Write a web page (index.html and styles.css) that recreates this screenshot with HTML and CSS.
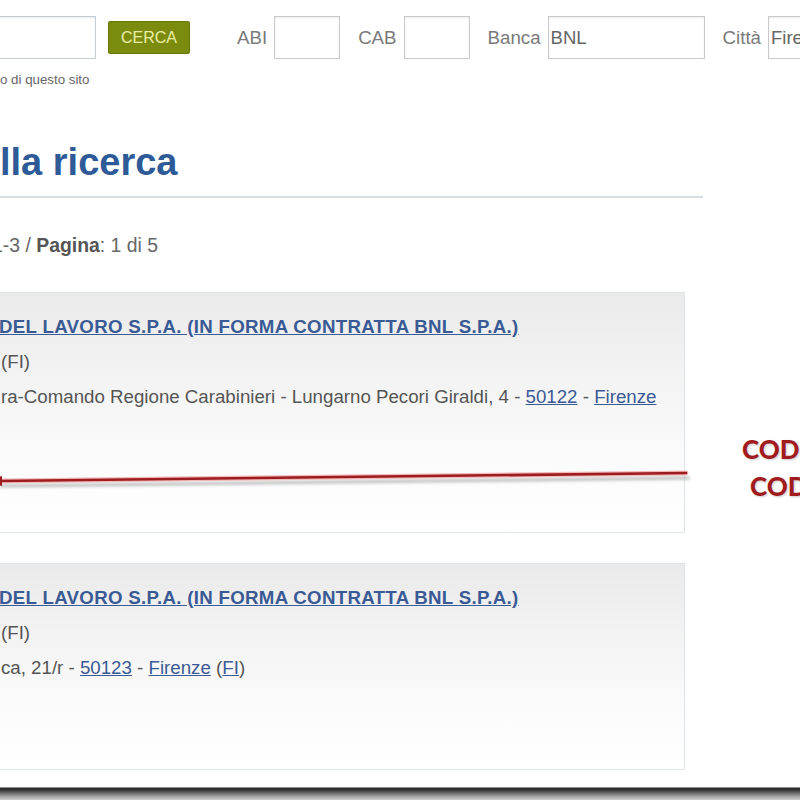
FILE: index.html
```html
<!DOCTYPE html>
<html lang="it">
<head>
<meta charset="utf-8">
<title>Risultati della ricerca</title>
<link rel="stylesheet" href="styles.css">
</head>
<body>
<div class="screen">
  <div class="topbar">
    <input class="field field-search" type="text" aria-label="Cerca">
    <button class="btn-cerca" type="button">CERCA</button>
    <label class="lbl lbl-first">ABI</label>
    <input class="field field-small" type="text">
    <label class="lbl">CAB</label>
    <input class="field field-small" type="text">
    <label class="lbl">Banca</label>
    <input class="field field-wide" type="text" value="BNL">
    <label class="lbl">Città</label>
    <input class="field field-wide" type="text" value="Firenze">
  </div>
  <div class="hint">o di questo sito</div>

  <h1 class="title">lla ricerca</h1>

  <div class="pager">1-3 / <b>Pagina</b>: 1 di 5</div>

  <div class="card card-tall">
    <div class="row"><a class="bank" href="#">DEL LAVORO S.P.A. (IN FORMA CONTRATTA BNL S.P.A.)</a></div>
    <div class="row">(FI)</div>
    <div class="row">ra-Comando Regione Carabinieri - Lungarno Pecori Giraldi, 4 - <a href="#">50122</a> - <a href="#">Firenze</a></div>
  </div>

  <div class="card">
    <div class="row"><a class="bank" href="#">DEL LAVORO S.P.A. (IN FORMA CONTRATTA BNL S.P.A.)</a></div>
    <div class="row">(FI)</div>
    <div class="row">ca, 21/r - <a href="#">50123</a> - <a href="#">Firenze</a> (<a href="#">FI</a>)</div>
  </div>

  <svg class="arrow" width="800" height="800" viewBox="0 0 800 800" aria-hidden="true">
    <defs>
      <filter id="blur" x="-5%" y="-200%" width="110%" height="500%">
        <feGaussianBlur stdDeviation="1.6"/>
      </filter>
    </defs>
    <line x1="0" y1="486" x2="690" y2="478" stroke="#8a8a8a" stroke-width="3" opacity="0.55" filter="url(#blur)"/>
    <line x1="0" y1="481" x2="686" y2="473" stroke="#f2b9b9" stroke-width="5" stroke-linecap="round"/>
    <line x1="0" y1="481" x2="686" y2="473" stroke="#9c1c1f" stroke-width="2.6" stroke-linecap="round"/>
    <polygon points="-16,481 2,476 2,486" fill="#9c1c1f"/>
  </svg>

  <div class="note">
    <div class="note-line">CODICE ABI</div>
    <div class="note-line note-line-2">CODICE CAB</div>
  </div>
</div>
<div class="frame"></div>
</body>
</html>
```

FILE: styles.css
```css
html, body {
  margin: 0;
  padding: 0;
  background: #ffffff;
}

body {
  width: 800px;
  height: 800px;
  overflow: hidden;
  font-family: "Liberation Sans", Arial, sans-serif;
  color: #555555;
}

.screen {
  position: relative;
  height: 787px;
  overflow: hidden;
  white-space: nowrap;
}

.topbar {
  display: flex;
  align-items: center;
  padding-top: 16px;
  height: 43px;
}

.topbar > * {
  flex-shrink: 0;
}

.field {
  box-sizing: border-box;
  height: 43px;
  border: 1px solid #c9c9c9;
  box-shadow: inset 0 1px 2px rgba(0, 0, 0, 0.08);
  background: #ffffff;
  font-family: "Liberation Sans", Arial, sans-serif;
  font-size: 18.5px;
  color: #666666;
  padding: 0 2px;
  margin: 0;
  outline: none;
}

.field-search {
  width: 120px;
  margin-left: -24px;
  border-color: #c5ccd6;
}

.field-small {
  width: 66px;
}

.field-wide {
  width: 157px;
}

.btn-cerca {
  box-sizing: border-box;
  margin-left: 12px;
  width: 82px;
  height: 33px;
  background: #7b8b0e;
  border: 1px solid #67750a;
  border-radius: 2px;
  color: #e9eea6;
  font-family: "Liberation Sans", Arial, sans-serif;
  font-size: 16px;
  padding: 0;
  text-align: center;
}

.lbl {
  font-size: 18.7px;
  color: #7a7a7a;
  margin-left: 18px;
  margin-right: 7px;
}

.lbl-first {
  margin-left: 47px;
}

.hint {
  margin-top: 13px;
  font-size: 13.3px;
  line-height: 16px;
  color: #666666;
}

.title {
  margin: 52px 0 0 0;
  width: 703px;
  font-size: 38px;
  line-height: 44px;
  font-weight: bold;
  color: #2e5b97;
  padding-bottom: 12px;
  border-bottom: 2px solid #d6dee4;
}

.pager {
  margin-top: 36px;
  margin-left: -8px;
  font-size: 19.4px;
  line-height: 22px;
  color: #666666;
}

.pager b {
  color: #555555;
}

.card {
  box-sizing: border-box;
  margin-left: -10px;
  width: 695px;
  height: 207px;
  padding: 16px 0 0 10px;
  border: 1px solid #dfe4e8;
  background: linear-gradient(#eaeaea 0%, #f3f3f3 35%, #fbfbfb 70%, #ffffff 100%);
  margin-bottom: 30px;
}

.card-tall {
  margin-top: 36px;
  height: 241px;
}

.row {
  font-size: 18.7px;
  line-height: 35px;
  color: #555555;
}

.row a {
  color: #3a5a95;
  text-decoration: underline;
}

.row a.bank {
  font-weight: bold;
  margin-left: -2px;
  letter-spacing: 0.3px;
}

.arrow {
  position: absolute;
  top: 0;
  left: 0;
  pointer-events: none;
}

.note {
  position: absolute;
  left: 742px;
  top: 431px;
  font-family: "Lato", "DejaVu Sans", sans-serif;
  font-weight: 900;
  font-size: 26px;
  line-height: 37px;
  color: #a01c1e;
  text-shadow: 0 0 2px #ffffff, 1px 1px 2px rgba(0, 0, 0, 0.25);
}

.note-line-2 {
  margin-left: 8px;
}

.frame {
  height: 13px;
  background: linear-gradient(#f0f0f0 0px, #2a2a2a 1px, #333333 3px, #6a6a6a 6px, #a8a8a8 10px, #cfcfcf 13px);
}
```
